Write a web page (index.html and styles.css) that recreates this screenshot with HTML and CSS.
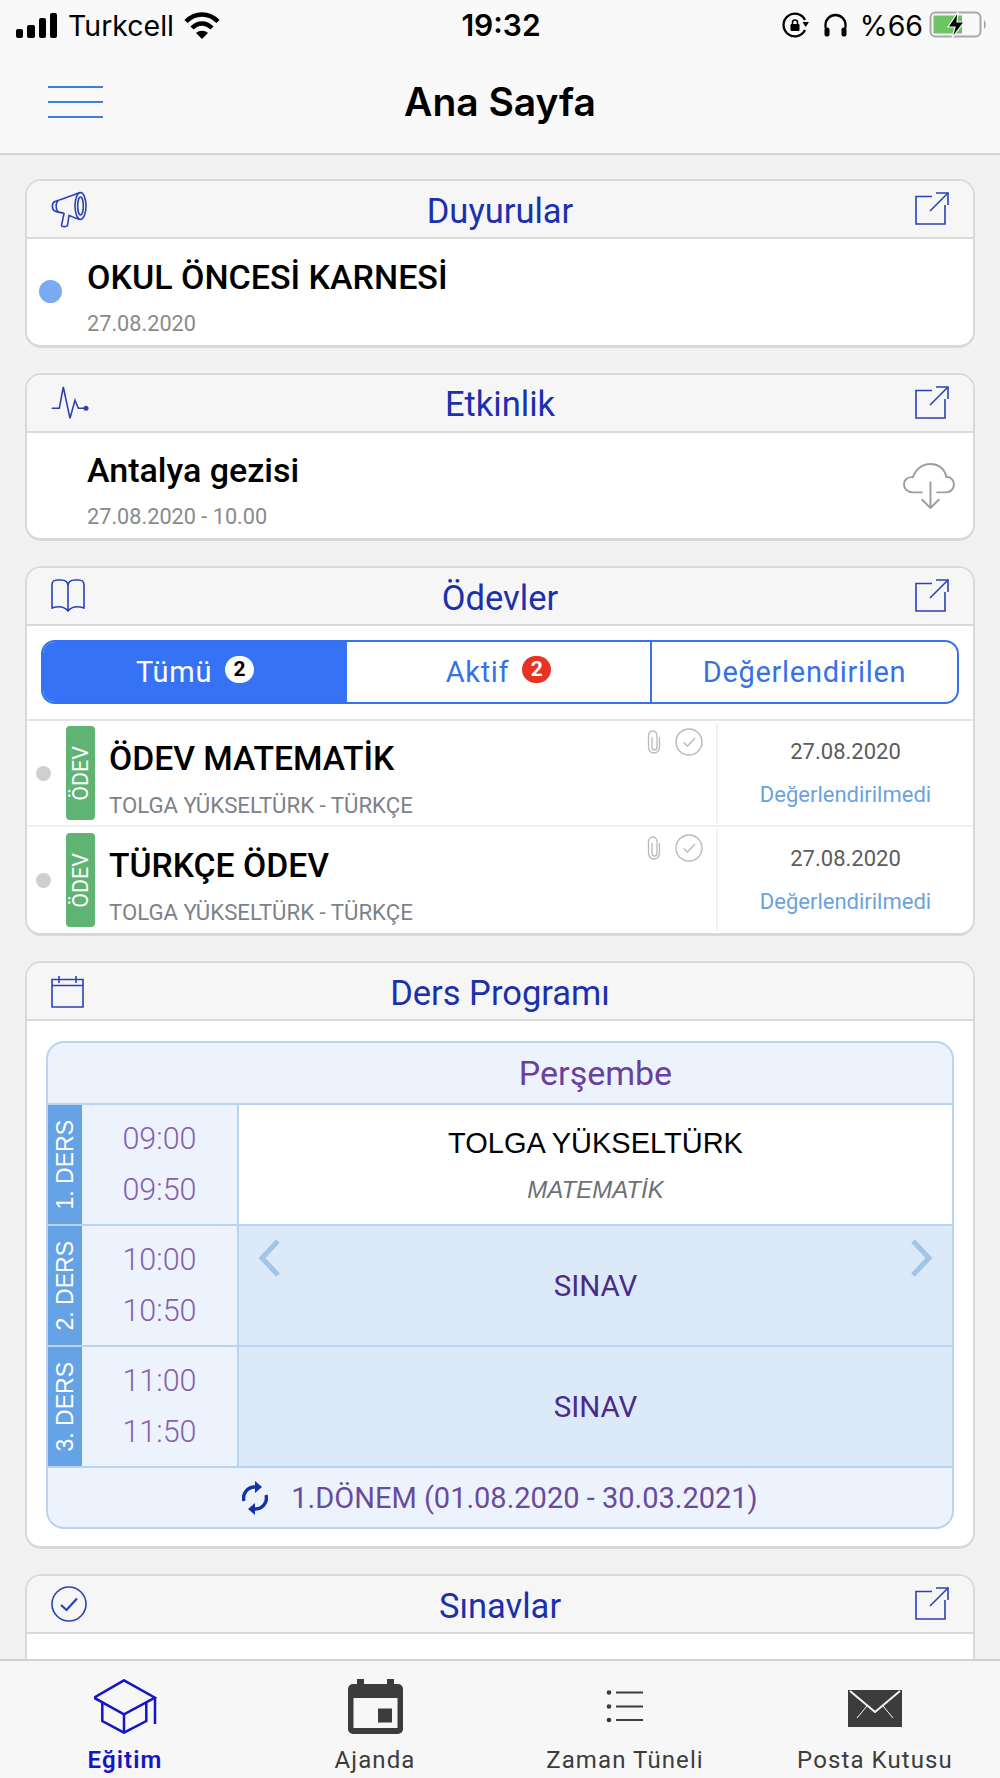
FILE: index.html
```html
<!DOCTYPE html>
<html lang="tr">
<head>
<meta charset="utf-8">
<title>Ana Sayfa</title>
<link rel="stylesheet" href="styles.css">
</head>
<body>
<div class="app">
  <div class="status">
    <div class="status-left">
      <svg class="i-signal" viewBox="0 0 41 25"><rect x="0" y="16" width="7" height="9" rx="2"/><rect x="11" y="12" width="8" height="13" rx="2"/><rect x="23" y="5" width="7" height="20" rx="2"/><rect x="34" y="0" width="7" height="25" rx="2"/></svg>
      <span>Turkcell</span>
      <svg class="i-wifi" viewBox="0 0 36 27"><path class="wf" d="M2 9.5C11 0 25 0 34 9.5"/><path class="wf" d="M8 16C14 10 22 10 28 16"/><path d="M12 21C15.5 18 20.5 18 24 21L18 27Z"/></svg>
    </div>
    <div class="status-time">19:32</div>
    <div class="status-right">
      <svg class="i-lock" viewBox="0 0 27 26"><path class="sk" d="M23 18A11.300 11.300 0 1 1 23 8"/><path d="M20.500 10H27L23.700 15Z"/><rect x="8.500" y="12" width="9" height="7" rx="1.200"/><path class="sk2" d="M10.500 12.500V10.500A2.500 2.500 0 0 1 15.500 10.500V12.500"/></svg>
      <svg class="i-head" viewBox="0 0 25 24"><path class="sk" d="M2.500 15V12A10 10 0 0 1 22.500 12V15"/><rect x="1.500" y="14.500" width="5" height="9" rx="2"/><rect x="18.500" y="14.500" width="5" height="9" rx="2"/></svg>
      <span class="pct">%66</span>
      <svg class="i-batt" viewBox="0 0 60 28"><rect x="1.500" y="1.500" width="50" height="24" rx="5" fill="none" stroke="#a8a8a8" stroke-width="2"/><path d="M4.500 4.500H33V22.500H4.500Z" fill="#6cc464"/><path d="M55 9C57 10 57.500 17 55 18Z" fill="#a3a3a3"/><path d="M29 1L19 16H26L23 27L35 11H28Z" fill="#000" stroke="#f9f9f9" stroke-width="1.200"/></svg>
    </div>
  </div>

  <header class="nav">
    <div class="burger"><span></span><span></span><span></span></div>
    <h1 class="nav-title">Ana Sayfa</h1>
    <div></div>
  </header>

  <main class="main">
    <section class="card card-a">
      <div class="card-head">
        <svg class="hi i-mega" viewBox="0 0 36 37"><path d="M29 1.500C21 5 10 8 4 10.500C0.500 12 0.500 18.500 4 20C6 21 10 21.500 13 22.500L10.500 34.500C10.500 36 16 36 16.500 34.500L18 24.500C22 26 25 27.500 29 28.500"/><ellipse cx="29.500" cy="15" rx="5.500" ry="13.500"/><ellipse cx="29.500" cy="15" rx="2.800" ry="9"/><path d="M7 9.500C4.500 13 4.500 17 7 21"/></svg>
        <h2 class="card-title">Duyurular</h2>
        <svg class="hi i-ext" viewBox="0 0 34 34"><path d="M17 4.500H1V32H30V13"/><path d="M15 19L33 1"/><path d="M21 1H33V13"/></svg>
      </div>
      <div class="card-body item">
        <span class="dot-blue"></span>
        <div class="item-text">
          <div class="item-title">OKUL ÖNCESİ KARNESİ</div>
          <div class="item-date">27.08.2020</div>
        </div>
      </div>
    </section>

    <section class="card card-a">
      <div class="card-head">
        <svg class="hi i-act" viewBox="0 0 38 34"><path d="M0.700 22.300H8.300L12.300 1L19 32.300L24 14.300L27.300 22.300H35"/><circle class="hf" cx="35" cy="22.300" r="2.500"/></svg>
        <h2 class="card-title">Etkinlik</h2>
        <svg class="hi i-ext" viewBox="0 0 34 34"><path d="M17 4.500H1V32H30V13"/><path d="M15 19L33 1"/><path d="M21 1H33V13"/></svg>
      </div>
      <div class="card-body item">
        <span></span>
        <div class="item-text">
          <div class="item-title">Antalya gezisi</div>
          <div class="item-date">27.08.2020 - 10.00</div>
        </div>
        <svg class="i-cloud" viewBox="0 0 53 48"><path d="M20 31H10C4 31 1 27 1 23C1 18 5 15 10 15.500C13 7 20 2 28 2C37 2 43 8 44 15C49 15 52 19 52 23C52 28 48 31 44 31H34"/><path d="M28 20V47M19 38L28 47L37 38"/></svg>
      </div>
    </section>

    <section class="card">
      <div class="card-head">
        <svg class="hi i-book" viewBox="0 0 34 34"><path d="M17 7C17 3 14 1 10 1H6C3 1 1 3 1 6V29C7 27 13 27 17 32C21 27 27 27 33 29V6C33 3 31 1 28 1H24C20 1 17 3 17 7V32"/></svg>
        <h2 class="card-title">Ödevler</h2>
        <svg class="hi i-ext" viewBox="0 0 34 34"><path d="M17 4.500H1V32H30V13"/><path d="M15 19L33 1"/><path d="M21 1H33V13"/></svg>
      </div>
      <div class="tabs-wrap">
        <div class="tabs">
          <div class="tab tab-on"><span>Tümü</span><span class="pill pill-white">2</span></div>
          <div class="tab"><span>Aktif</span><span class="pill pill-red">2</span></div>
          <div class="tab"><span>Değerlendirilen</span></div>
        </div>
      </div>
      <div class="hw">
        <span class="dot-grey"></span>
        <span class="hw-badge"><span>ÖDEV</span></span>
        <div class="hw-main">
          <div class="hw-title">ÖDEV MATEMATİK</div>
          <div class="hw-sub">TOLGA YÜKSELTÜRK - TÜRKÇE</div>
        </div>
        <div class="hw-icons">
          <svg class="i-clip" viewBox="0 0 14 26"><path d="M12.500 9V19A5.500 6 0 0 1 1.500 19V7A4.500 6 0 0 1 10 7V19A2.500 3 0 0 1 5 19V9"/></svg>
          <svg class="i-chk" viewBox="0 0 28 28"><circle cx="14" cy="14" r="13"/><path d="M8.500 14.500L12.500 18L20 10"/></svg>
        </div>
        <div class="hw-side">
          <div class="hw-date">27.08.2020</div>
          <div class="hw-state">Değerlendirilmedi</div>
        </div>
      </div>
      <div class="hw">
        <span class="dot-grey"></span>
        <span class="hw-badge"><span>ÖDEV</span></span>
        <div class="hw-main">
          <div class="hw-title">TÜRKÇE ÖDEV</div>
          <div class="hw-sub">TOLGA YÜKSELTÜRK - TÜRKÇE</div>
        </div>
        <div class="hw-icons">
          <svg class="i-clip" viewBox="0 0 14 26"><path d="M12.500 9V19A5.500 6 0 0 1 1.500 19V7A4.500 6 0 0 1 10 7V19A2.500 3 0 0 1 5 19V9"/></svg>
          <svg class="i-chk" viewBox="0 0 28 28"><circle cx="14" cy="14" r="13"/><path d="M8.500 14.500L12.500 18L20 10"/></svg>
        </div>
        <div class="hw-side">
          <div class="hw-date">27.08.2020</div>
          <div class="hw-state">Değerlendirilmedi</div>
        </div>
      </div>
    </section>

    <section class="card">
      <div class="card-head">
        <svg class="hi i-cal" viewBox="0 0 33 33"><path d="M1 4.500H32V32H1Z"/><path d="M1 10.500H32"/><path d="M8 1V8M25 1V8"/></svg>
        <h2 class="card-title">Ders Programı</h2>
        <div></div>
      </div>
      <div class="tt-wrap">
        <div class="tt">
          <div class="tt-head">Perşembe</div>
          <div class="tt-row">
            <div class="tt-label"><span>1. DERS</span></div>
            <div class="tt-time"><span>09:00</span><span>09:50</span></div>
            <div class="tt-cell tt-cell-white">
              <div class="tt-teacher">TOLGA YÜKSELTÜRK</div>
              <div class="tt-subject">MATEMATİK</div>
            </div>
          </div>
          <div class="tt-row">
            <div class="tt-label"><span>2. DERS</span></div>
            <div class="tt-time"><span>10:00</span><span>10:50</span></div>
            <div class="tt-cell">
              <svg class="chev chev-l" viewBox="0 0 22 38"><path d="M20 2L4 19L20 36"/></svg>
              <div class="tt-exam">SINAV</div>
              <svg class="chev chev-r" viewBox="0 0 22 38"><path d="M2 2L18 19L2 36"/></svg>
            </div>
          </div>
          <div class="tt-row">
            <div class="tt-label"><span>3. DERS</span></div>
            <div class="tt-time"><span>11:00</span><span>11:50</span></div>
            <div class="tt-cell"><div class="tt-exam">SINAV</div></div>
          </div>
          <div class="tt-foot">
            <svg class="i-sync" viewBox="0 0 26 34"><path class="sy" d="M2 20A11 11 0 0 1 13 6"/><path d="M13 0L20 6L13 12Z"/><path class="sy" d="M24 14A11 11 0 0 1 13 28"/><path d="M13 22L6 28L13 34Z"/></svg>
            <span>1.DÖNEM (01.08.2020 - 30.03.2021)</span>
          </div>
        </div>
      </div>
    </section>

    <section class="card card-cut">
      <div class="card-head">
        <svg class="hi i-done" viewBox="0 0 36 36"><circle cx="18" cy="18" r="17"/><path class="thick" d="M10 19L15.500 24L26 12.500"/></svg>
        <h2 class="card-title">Sınavlar</h2>
        <svg class="hi i-ext" viewBox="0 0 34 34"><path d="M17 4.500H1V32H30V13"/><path d="M15 19L33 1"/><path d="M21 1H33V13"/></svg>
      </div>
      <div class="card-body-cut"></div>
    </section>
  </main>

  <nav class="tabbar">
    <div class="tb tb-on">
      <svg class="i-cap" viewBox="0 0 63 55"><path d="M0 18.700L30 1.300L61 18.700L30 35.300Z"/><path d="M8.300 23.700V42L30 53.700L52.300 42V23.700"/><path d="M30 35.300V53.700M61 18.700V45"/></svg>
      <span>Eğitim</span>
    </div>
    <div class="tb">
      <svg class="i-ajanda" viewBox="0 0 55 55"><rect x="9" y="0" width="7" height="8"/><rect x="39" y="0" width="7" height="8"/><rect x="0" y="5" width="55" height="50" rx="5"/><rect class="win" x="5.500" y="19" width="44" height="30"/><rect x="30" y="29.500" width="14" height="14"/></svg>
      <span>Ajanda</span>
    </div>
    <div class="tb">
      <svg class="i-list" viewBox="0 0 38 33"><circle cx="3" cy="2.500" r="2.300"/><circle cx="3" cy="16.500" r="2.300"/><circle cx="3" cy="30" r="2.300"/><path d="M10 2.500H37M10 16.500H37M10 30H37"/></svg>
      <span>Zaman Tüneli</span>
    </div>
    <div class="tb">
      <svg class="i-mail" viewBox="0 0 54 37"><rect width="54" height="37"/><path d="M2 1L27 22L52 1"/><path class="thin" d="M9 28L19 16M45 28L35 16"/></svg>
      <span>Posta Kutusu</span>
    </div>
  </nav>
</div>
</body>
</html>
```
FILE: styles.css
```css
* { box-sizing: border-box; }
html, body { margin: 0; padding: 0; }
body { font-family: Roboto, "Liberation Sans", sans-serif; background: #f2f2f2; color: #000; }
h1, h2 { margin: 0; font-weight: inherit; }
svg { display: block; flex: none; }

.app { width: 1000px; height: 1778px; display: flex; flex-direction: column; overflow: hidden; }

/* status bar */
.status { height: 50px; flex: none; background: #f9f9f9; display: grid; grid-template-columns: 1fr auto 1fr; align-items: center; padding: 0 11px 0 16px; font-family: Inter, Roboto, sans-serif; font-size: 28.500px; }
.status-left { display: flex; align-items: center; }
.status-right { display: flex; align-items: center; justify-content: flex-end; }
.status-time { font-weight: 600; font-size: 30px; margin-left: -3px; }
.i-signal { width: 41px; height: 25px; margin: 0 11px 0 0; }
.i-wifi { width: 36px; height: 27px; margin-left: 10px; }
.wf { fill: none; stroke: #000; stroke-width: 4.500; }
.i-lock { width: 27px; height: 26px; margin-right: 14px; }
.sk { fill: none; stroke: #000; stroke-width: 2.300; }
.sk2 { fill: none; stroke: #000; stroke-width: 1.600; }
.i-head { width: 25px; height: 24px; margin-right: 12px; }
.pct { margin-right: 6px; }
.i-batt { width: 60px; height: 28px; }

/* nav */
.nav { height: 105px; flex: none; background: #f9f9f9; border-bottom: 2px solid #d6d6d6; display: grid; grid-template-columns: 1fr auto 1fr; align-items: center; padding: 0 48px; }
.burger { width: 55px; display: flex; flex-direction: column; gap: 13px; }
.burger span { height: 2px; background: #3f7de0; }
.nav-title { font-family: Inter, Roboto, sans-serif; font-size: 39px; font-weight: 600; }

/* main */
.main { flex: 1; min-height: 0; overflow: hidden; padding: 24px 25px 0; display: flex; flex-direction: column; gap: 25px; }
.card { flex: none; background: #fff; border: 2px solid #d9d9d9; border-bottom-width: 3px; border-radius: 16px; overflow: hidden; }
.card-head { height: 58px; background: #f6f6f6; border-bottom: 2px solid #dadada; display: grid; grid-template-columns: 1fr auto 1fr; align-items: center; padding: 0 24px; }
.card-title { font-size: 34.500px; color: #1a30ad; font-weight: 400; margin-top: 3px; }
.hi { fill: none; stroke: #2a42b4; stroke-width: 1.600; }
.hf { fill: #2a42b4; stroke: none; }
.thick { stroke-width: 2.200; }
.i-ext { width: 34px; height: 34px; justify-self: end; }
.i-mega { width: 36px; height: 37px; }
.i-act { width: 38px; height: 34px; }
.i-book { width: 34px; height: 34px; }
.i-cal { width: 33px; height: 33px; }
.i-done { width: 36px; height: 36px; }

.card-body { height: 105.500px; }
.item { display: grid; grid-template-columns: 60px 1fr auto; align-items: center; padding-right: 18px; }
.dot-blue { width: 23px; height: 23px; border-radius: 50%; background: #7aaaf0; margin-left: 11.500px; }
.item-text { padding-top: 8px; }
.item-title { font-size: 34px; font-weight: 500; line-height: 42px; }
.item-date { font-size: 21.700px; color: #8a8a8a; line-height: 24px; margin-top: 14px; }
.i-cloud { width: 52px; height: 47px; fill: none; stroke: #9a9ea3; stroke-width: 2; }

/* tabs */
.tabs-wrap { padding: 14px 14px 15px; border-bottom: 2px solid #e5e5e5; }
.tabs { height: 64px; display: grid; grid-template-columns: 304px 305px 1fr; border: 2px solid #3672f0; border-radius: 14px; overflow: hidden; }
.tab { display: flex; align-items: center; justify-content: center; gap: 13px; font-size: 29px; letter-spacing: 0.700px; color: #3672e6; border-right: 2px solid #3672e6; }
.tab:last-child { border-right: 0; }
.tab-on { background: #3672f6; color: #fff; border-right: 0; }
.pill { width: 29px; height: 27px; border-radius: 14px; font-size: 21px; font-weight: 700; letter-spacing: 0; display: flex; align-items: center; justify-content: center; margin-top: -6px; }
.pill-white { background: #fff; color: #000; }
.pill-red { background: #e63325; color: #fff; }

/* homework */
.hw { height: 106px; display: flex; align-items: center; border-bottom: 2px solid #eeeeee; position: relative; }
.hw:last-child { border-bottom: 0; }
.dot-grey { width: 15px; height: 15px; border-radius: 50%; background: #cfcfcf; margin: 0 15px 0 9px; }
.hw-badge { width: 29px; height: 94px; border-radius: 4px; background: #5fb373; color: #fff; display: flex; align-items: center; justify-content: center; font-size: 21.500px; }
.hw-badge span { writing-mode: vertical-rl; transform: rotate(180deg); }
.hw-main { flex: 1; padding: 9px 0 0 14px; white-space: nowrap; }
.hw-title { font-size: 33.700px; font-weight: 500; line-height: 40px; }
.hw-sub { font-size: 22.200px; color: #7d828a; line-height: 24px; margin-top: 14px; }
.hw-icons { align-self: flex-start; display: flex; align-items: flex-start; gap: 14px; padding: 7px 13px 0 0; }
.i-clip { width: 14px; height: 26px; fill: none; stroke: #b9b9b9; stroke-width: 1.300; }
.i-chk { width: 28px; height: 28px; fill: none; stroke: #b9b9b9; stroke-width: 1.400; }
.hw-side { width: 257px; align-self: stretch; margin: 2px 0; border-left: 2px solid #f1f1f1; display: flex; flex-direction: column; align-items: center; justify-content: center; }
.hw-date { font-size: 22px; color: #5c5c5c; line-height: 26px; }
.hw-state { font-size: 22px; color: #6aa2e2; line-height: 26px; margin-top: 17px; }

/* timetable */
.tt-wrap { padding: 20px 19px 17px; }
.tt { border: 2px solid #b9d4f3; border-radius: 18px; overflow: hidden; background: #edf3fc; }
.tt-head { height: 62px; border-bottom: 2px solid #b9d4f3; padding-left: 191px; display: flex; align-items: center; justify-content: center; font-size: 34px; color: #6a3f9e; }
.tt-row { height: 121px; display: grid; grid-template-columns: 34px 157px 1fr; border-bottom: 2px solid #b9d4f3; }
.tt-label { background: #66a3e6; color: #fff; display: flex; align-items: center; justify-content: center; font-family: "Liberation Sans", sans-serif; font-size: 23px; }
.tt-label span { writing-mode: vertical-rl; transform: rotate(180deg); white-space: nowrap; }
.tt-time { border-right: 2px solid #b9d4f3; display: flex; flex-direction: column; align-items: center; justify-content: center; gap: 17px; font-size: 30.500px; font-weight: 300; color: #8560ae; line-height: 34px; }
.tt-cell { background: #dce9f8; display: flex; flex-direction: column; align-items: center; justify-content: center; position: relative; }
.tt-cell-white { background: #fff; }
.tt-teacher { font-family: "Liberation Sans", sans-serif; font-size: 29px; line-height: 34px; }
.tt-subject { font-family: "Liberation Sans", sans-serif; font-style: italic; font-size: 24px; color: #6d7074; line-height: 28px; margin-top: 16px; }
.tt-exam { font-size: 29.500px; color: #4a2a8a; }
.chev { position: absolute; top: 13px; width: 22px; height: 38px; fill: none; stroke: #a3c3e8; stroke-width: 5; }
.chev-l { left: 19px; }
.chev-r { right: 19px; }
.tt-foot { height: 59px; display: flex; align-items: center; justify-content: center; gap: 23px; font-size: 29px; color: #6a4a9e; }
.i-sync { width: 26px; height: 34px; fill: #1530a8; }
.sy { fill: none; stroke: #1530a8; stroke-width: 3.400; }

.card-cut { flex: none; }
.card-body-cut { height: 60px; }

/* tab bar */
.tabbar { height: 119px; flex: none; background: #f7f7f7; border-top: 2px solid #d2d2d2; display: grid; grid-template-columns: repeat(4, 1fr); }
.tb { display: flex; flex-direction: column; align-items: center; justify-content: flex-end; gap: 12px; padding-bottom: 4px; font-size: 24px; letter-spacing: 1.100px; color: #3c3c3c; }
.tb-on { color: #1414c8; font-weight: 600; }
.i-cap { width: 63px; height: 55px; fill: none; stroke: #1414c8; stroke-width: 2.500; }
.i-ajanda { width: 55px; height: 55px; fill: #3c3c3c; }
.win { fill: #f7f7f7; }
.i-list { width: 38px; height: 33px; margin: 0 0 11px; fill: #3c3c3c; stroke: none; }
.i-list path { fill: none; stroke: #3c3c3c; stroke-width: 2; }
.i-mail { width: 54px; height: 37px; margin: 0 0 7px; fill: #3c3c3c; }
.i-mail path { fill: none; stroke: #f7f7f7; stroke-width: 2; }
.i-mail .thin { stroke-width: 1; }
```
